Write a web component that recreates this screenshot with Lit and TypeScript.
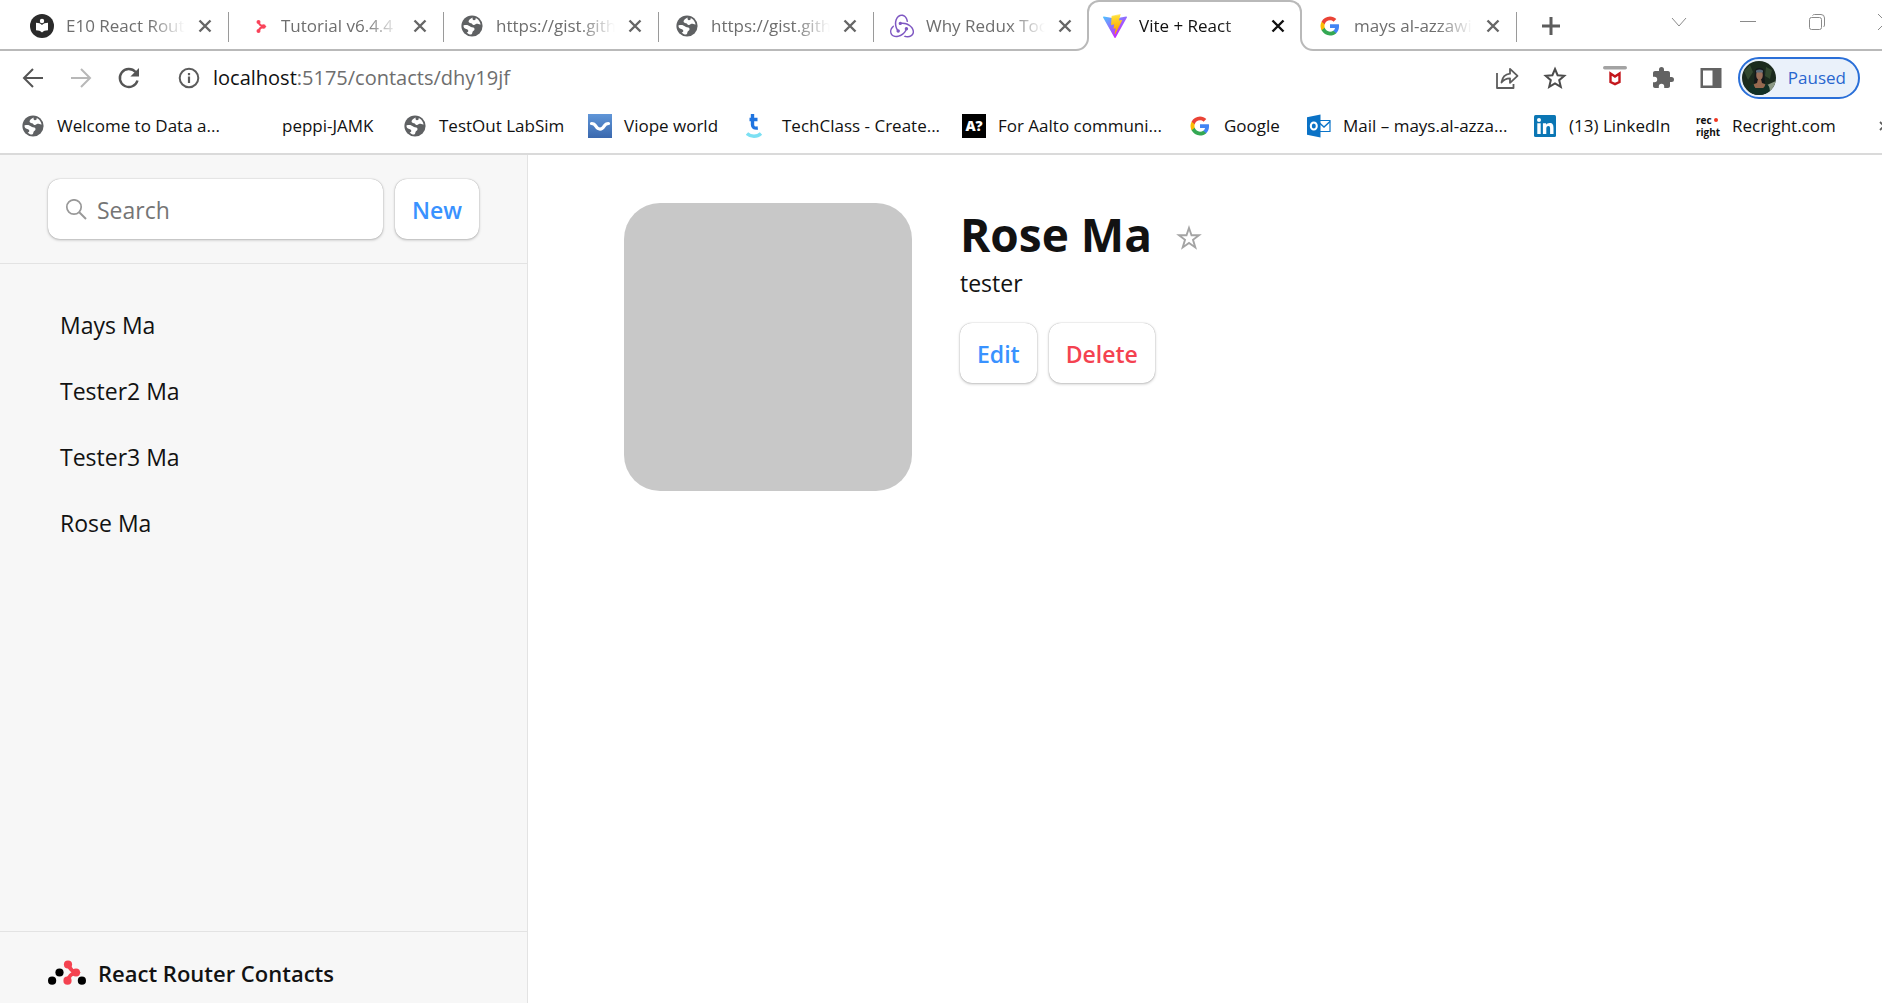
import { LitElement, html, css, svg, nothing, type TemplateResult } from "lit";
import { customElement, property, state } from "lit/decorators.js";
import { classMap } from "lit/directives/class-map.js";

/* ---------- icons ---------- */

const icon = (size: number, box: string, body: unknown) =>
  html`<svg width=${size} height=${size} viewBox=${box} fill="none" aria-hidden="true">${body}</svg>`;

const globe = () =>
  icon(24, "0 0 24 24", svg`
    <circle cx="12" cy="12" r="10.6" fill="#5f6163"/>
    <path fill="#fff" d="M12.6 3.4C11 4.3 9 5.4 8.6 7c-.3 1.500 1 2 2.400 2.200 1.200.2 1.300 1.500 2.500 1.800 1.500.4 1.700-1 3-1.200 1.400-.1 2.500.8 4.100.6C20 6.800 17.200 4.300 15.600 3.900c.5 1.200-.2 2.300-1.600 2.300-1.100 0-1.700-1-1.400-2.800z"/>
    <path fill="#fff" d="M3.400 11.600c1.600-.6 3.600-.6 4.900-.2 1.600.5 2.200 1.600 3.700 1.900 1.700.3 2.700.6 2.500 2.100-.2 1.300-1.600 1.300-2 2.500-.3 1 0 1.700-1.400 2.700-1.900-.2-3.300-1-4.500-2.200.9.100 1.700-.4 1.700-1.400 0-1.100-.8-1.800-2.200-2-1.500-.2-2.500-1.200-2.700-3.400z"/>`);

const reader = () =>
  icon(24, "0 0 24 24", svg`
    <circle cx="12" cy="12" r="12" fill="#2b2b2b"/>
    <circle cx="12" cy="7" r="2.200" fill="#fff"/>
    <path d="M6 8.800c2.600 0 4.600.8 6 2.200 1.400-1.400 3.400-2.200 6-2.200v7.400c-2.600 0-4.600.8-6 2.200-1.400-1.400-3.400-2.200-6-2.200z" fill="#fff"/>`);

const routerArrow = () =>
  icon(24, "0 0 24 24", svg`
    <path d="M13.500 8c1 2.500 1 3 5 4.500-3 .8-4 1.500-5 4.500" stroke="#f9435a" stroke-width="2"/>
    <circle cx="13.500" cy="8" r="2" fill="#f9435a"/>
    <circle cx="18.500" cy="12.500" r="2.300" fill="#f9435a"/>
    <circle cx="13.500" cy="17" r="2" fill="#f9435a"/>`);

const redux = () =>
  icon(24, "0 0 24 24", svg`<path fill="#7e57c2" d="M16.634 16.504c.87-.075 1.543-.84 1.5-1.754-.047-.914-.796-1.648-1.709-1.648h-.061a1.71 1.71 0 00-1.648 1.769c.03.479.226.869.494 1.153-1.048 2.038-2.621 3.535-5.005 4.795-1.603.838-3.296 1.154-4.944.93-1.378-.195-2.456-.81-3.116-1.799-.988-1.499-1.078-3.116-.255-4.734.601-1.166 1.499-2.023 2.099-2.443a9.96 9.96 0 01-.42-1.543C-.868 14.408-.416 18.752.932 20.805c1.004 1.498 3.057 2.456 5.304 2.456.599 0 1.23-.044 1.843-.194 3.897-.749 6.848-3.086 8.541-6.532zM21.99 12.759c-2.308-2.709-5.709-4.193-9.606-4.193h-.51c-.253-.554-.837-.899-1.498-.899h-.045c-.943 0-1.678.81-1.647 1.753.03.898.794 1.648 1.708 1.648h.074a1.69 1.69 0 001.499-1.049h.555c2.309 0 4.495.674 6.488 1.992 1.527 1.005 2.622 2.323 3.237 3.896.538 1.288.509 2.547-.045 3.597-.855 1.647-2.294 2.517-4.196 2.517-1.199 0-2.367-.375-2.967-.644-.36.298-.96.793-1.394 1.093 1.318.598 2.652.943 3.94.943 2.922 0 5.093-1.647 5.918-3.236.898-1.798.824-4.824-1.47-7.416zM6.49 17.042c.03.899.793 1.648 1.708 1.648h.06a1.688 1.688 0 001.648-1.768c0-.9-.779-1.647-1.693-1.647h-.06c-.06 0-.149 0-.226.029-1.243-2.098-1.768-4.347-1.572-6.772.12-1.828.72-3.417 1.797-4.735.899-1.124 2.593-1.68 3.746-1.708 3.236-.061 4.585 3.971 4.689 5.574l1.498.45C17.741 3.197 14.686.62 11.764.62 9.02.62 6.49 2.613 5.47 5.535 4.077 9.43 4.991 13.177 6.7 16.174c-.15.195-.24.539-.21.868z"/>`);

const vite = () =>
  icon(24, "0 0 24 24", svg`
    <defs>
      <linearGradient id="vite-a" x1="0" y1="0" x2="14" y2="20" gradientUnits="userSpaceOnUse"><stop stop-color="#41d1ff"/><stop offset="1" stop-color="#bd34fe"/></linearGradient>
      <linearGradient id="vite-b" x1="12" y1="1" x2="14" y2="16" gradientUnits="userSpaceOnUse"><stop stop-color="#ffea83"/><stop offset=".1" stop-color="#ffdd35"/><stop offset="1" stop-color="#ffa800"/></linearGradient>
    </defs>
    <path fill="url(#vite-a)" d="M23.900 3.500 12.600 23.700c-.3.400-.8.400-1.100 0L.1 3.500c-.3-.5.200-1.100.7-1l11.300 2 11.100-2c.6-.1 1 .5.7 1z"/>
    <path fill="url(#vite-b)" d="m17.300 0-8.400 1.700a.3.300 0 0 0-.3.300L8.100 10.700c0 .2.200.4.400.3l2.300-.5c.2-.1.400.1.400.4l-.7 3.400c-.1.200.2.400.4.400l1.400-.5c.2 0 .5.200.4.400l-1.100 5.300c-.1.300.4.500.5.200l.2-.2 6.800-13.500c.1-.3-.1-.5-.4-.5l-2.400.5c-.2 0-.4-.2-.3-.4L17.600.4c.1-.3-.1-.5-.3-.4z"/>`);

const google = () =>
  icon(24, "-4 -4 56 56", svg`
    <path fill="#4285f4" d="M45.120 24.500c0-1.560-.14-3.060-.4-4.500H24v8.510h11.840c-.51 2.750-2.060 5.080-4.390 6.640v5.520h7.110c4.160-3.830 6.560-9.470 6.560-16.170z"/>
    <path fill="#34a853" d="M24 46c5.940 0 10.920-1.970 14.560-5.330l-7.110-5.520c-1.970 1.320-4.490 2.100-7.450 2.100-5.730 0-10.580-3.870-12.310-9.070H4.340v5.700C7.960 41.070 15.400 46 24 46z"/>
    <path fill="#fbbc04" d="M11.690 28.180a13.200 13.200 0 0 1 0-8.360v-5.700H4.340a21.990 21.990 0 0 0 0 19.760l7.350-5.700z"/>
    <path fill="#ea4335" d="M24 10.750c3.230 0 6.130 1.110 8.410 3.290l6.310-6.310C34.910 4.180 29.930 2 24 2 15.400 2 7.960 6.930 4.340 14.120l7.350 5.700c1.730-5.200 6.580-9.070 12.310-9.070z"/>`);

const viope = () =>
  icon(24, "0 0 24 24", svg`
    <defs><linearGradient id="viope-a" x1="0" y1="0" x2="0" y2="1"><stop stop-color="#6096d8"/><stop offset="1" stop-color="#3a68ae"/></linearGradient></defs>
    <path fill="url(#viope-a)" d="M0 0h24v24H0z"/>
    <path d="M3.500 9.500c3 0 3.400 1 4.600 3 2 3.400 5.800 3.400 7.800 0 1.200-2 1.600-3 4.600-3" stroke="#fff" stroke-width="3.200" stroke-linecap="round"/>`);

const techClass = () =>
  icon(24, "0 0 24 24", svg`
    <path d="M6.500 0v10.500c0 3 1.800 4 5.300 3.500M3.500 5.500h8" stroke="#1f74e0" stroke-width="3.400"/>
    <path d="M1 19.500c4 3.700 10 3.700 14 0" stroke="#7ce0f3" stroke-width="3.400"/>`);

const outlook = () =>
  icon(24, "0 0 24 24", svg`
    <path d="M12 6.500h11v11H12z" fill="#fff" stroke="#0a74c9" stroke-width="1.200"/>
    <path d="m12.500 9 4.500 4 6-5.500" stroke="#0a74c9" stroke-width="1.400"/>
    <path fill="#0a72c6" d="m0 3.200 13.500-2.700v23L0 20.800z"/>
    <ellipse cx="6.800" cy="12" rx="3" ry="3.600" stroke="#fff" stroke-width="2"/>`);

const linkedIn = () =>
  icon(24, "0 0 24 24", svg`
    <rect x="1" y="1" width="22" height="22" rx="1.500" fill="#0b76b4"/>
    <circle cx="6" cy="6" r="2" fill="#fff"/>
    <path d="M4.300 9.300h3.400V20H4.300zM9.900 9.300h3.200v1.500c.6-1 1.800-1.800 3.500-1.800 3.200 0 3.900 2 3.900 5v6h-3.400v-5.300c0-1.500-.2-2.700-1.700-2.700-1.600 0-2.100 1.200-2.100 2.700V20H9.900z" fill="#fff"/>`);

const aalto = () => html`<span class="mark aalto">A?</span>`;
const recright = () => html`<span class="mark recright"><span>rec<i></i></span><span>right</span></span>`;
const blank = () => html`<span class="mark"></span>`;

const cross = (width: number) =>
  icon(14, "0 0 14 14", svg`<path d="m1.500 1.500 11 11m0-11-11 11" stroke="currentColor" stroke-width=${width}/>`);

/* ---------- tab strip ---------- */

interface Tab { title: string; mark: () => TemplateResult; }

@customElement("tab-strip")
export class TabStrip extends LitElement {
  @state() private active = 5;

  private tabs: Tab[] = [
    { title: "E10 React Route", mark: reader },
    { title: "Tutorial v6.4.4 |", mark: routerArrow },
    { title: "https://gist.gith", mark: globe },
    { title: "https://gist.gith", mark: globe },
    { title: "Why Redux Tool", mark: redux },
    { title: "Vite + React", mark: vite },
    { title: "mays al-azzawi", mark: google },
  ];

  static styles = css`
    :host { display: block; }
    .strip {
      display: flex; height: 51px; padding-left: 14px; overflow: hidden;
      background: linear-gradient(#b9b9b9, #b9b9b9) bottom / 100% 2px no-repeat #fff;
    }
    .tab {
      flex: 0 1 215px; min-width: 0; box-sizing: border-box; position: relative;
      display: flex; align-items: center; gap: 12px; padding: 0 16px 0 16px;
    }
    .tab::after {
      content: ""; position: absolute; right: 0; top: 12px; height: 30px; width: 1px; background: #9a9a9a;
    }
    .tab.active::after, .tab.before::after { display: none; }
    .tab.active {
      background: #fff; border: 2px solid #b9b9b9; border-bottom: 0; border-radius: 12px 12px 0 0;
      margin-left: -2px; padding: 0 14px 2px;
    }
    .pick {
      flex: 1; min-width: 0; display: flex; align-items: center; gap: 12px;
      border: 0; padding: 0; background: none; font: inherit; color: #6e6e6e; text-align: left;
    }
    .pick svg { flex: none; }
    .title {
      flex: 1; min-width: 0; overflow: hidden; white-space: nowrap; line-height: 24px;
      -webkit-mask-image: linear-gradient(to right, #000 calc(100% - 36px), transparent);
      mask-image: linear-gradient(to right, #000 calc(100% - 36px), transparent);
    }
    .active .pick, .active .close { color: #111; }
    .close { border: 0; padding: 0; background: none; color: #666; display: flex; width: 16px; justify-content: center; }
    .foot { position: absolute; bottom: 0; }
    .foot.left { left: -14px; }
    .foot.right { right: -14px; }
    .add { border: 0; background: none; color: #5c5c5c; display: flex; align-items: center; padding: 0 24px; }
    .window { margin-left: auto; margin-right: -38px; flex: none; display: flex; padding-bottom: 7px; }
    .window button {
      width: 69px; border: 0; padding: 0; background: none; color: #8a8a8a;
      display: flex; align-items: center; justify-content: center;
    }
  `;

  render() {
    return html`<div class="strip">
      ${this.tabs.map((tab, i) => html`
        <div class=${classMap({ tab: true, active: i === this.active, before: i === this.active - 1 })}>
          <button class="pick" @click=${() => (this.active = i)}>${tab.mark()}<span class="title">${tab.title}</span></button>
          <button class="close" aria-label="Close tab">${cross(2.4)}</button>
          ${i === this.active ? html`
            <svg class="foot left" width="14" height="14" viewBox="0 0 14 14" aria-hidden="true"><path d="M0 13h1A12 12 0 0 0 13 1V0h1v14H0z" fill="#fff"/><path d="M0 13h1A12 12 0 0 0 13 1V0" fill="none" stroke="#b9b9b9" stroke-width="2"/></svg>
            <svg class="foot right" width="14" height="14" viewBox="0 0 14 14" aria-hidden="true"><path d="M14 13h-1A12 12 0 0 1 1 1V0H0v14h14z" fill="#fff"/><path d="M14 13h-1A12 12 0 0 1 1 1V0" fill="none" stroke="#b9b9b9" stroke-width="2"/></svg>` : nothing}
        </div>`)}
      <button class="add" aria-label="New tab">${icon(20, "0 0 20 20", svg`<path d="M10 1v18M1 10h18" stroke="currentColor" stroke-width="3"/>`)}</button>
      <div class="window">
        <button aria-label="Search tabs">${icon(16, "0 0 16 16", svg`<path d="m1 4 7 8 7-8" stroke="currentColor"/>`)}</button>
        <button aria-label="Minimize">${icon(16, "0 0 16 16", svg`<path d="M0 7.500h16" stroke="currentColor"/>`)}</button>
        <button aria-label="Restore">${icon(16, "0 0 16 16", svg`<rect x=".5" y="3.500" width="12" height="12" rx="2" stroke="currentColor"/><path d="M3.500 1.500c.5-.7 1-1 2-1H12A3.500 3.500 0 0 1 15.500 4v7c0 .8-.4 1.500-1 2" stroke="currentColor"/>`)}</button>
        <button aria-label="Close">${icon(16, "0 0 16 16", svg`<path d="m0 0 16 16M16 0 0 16" stroke="currentColor"/>`)}</button>
      </div>
    </div>`;
  }
}

/* ---------- address bar ---------- */

@customElement("address-bar")
export class AddressBar extends LitElement {
  static styles = css`
    :host { display: block; }
    .bar { display: flex; align-items: center; height: 54px; padding: 0 22px 0 21px; }
    button { border: 0; padding: 0; background: none; color: #5c5c5c; display: flex; flex: none; }
    .nav { display: flex; gap: 24px; }
    .info { margin: 0 12px 0 36px; }
    .url { font-size: 20px; line-height: 28px; color: #6e6e6e; white-space: nowrap; flex: 1; }
    .url b { font-weight: 400; color: #111; }
    .tools { display: flex; gap: 24px; align-items: center; }
    .extensions { display: flex; gap: 24px; margin: 0 15px 0 36px; align-items: center; }
    .profile {
      box-sizing: border-box; height: 42px; padding: 0 12px 0 2px; gap: 12px; align-items: center;
      border: 2px solid #2a6fd8; border-radius: 21px; background: #eaf1fa; color: #2866cf;
      font: inherit; line-height: 24px;
    }
  `;

  render() {
    return html`<div class="bar">
      <div class="nav">
        <button aria-label="Back">${icon(24, "0 0 24 24", svg`<path d="M22 12H3m9-9-9 9 9 9" stroke="#555" stroke-width="2"/>`)}</button>
        <button aria-label="Forward">${icon(24, "0 0 24 24", svg`<path d="M2 12h19m-9-9 9 9-9 9" stroke="#b8b8b8" stroke-width="2"/>`)}</button>
        <button aria-label="Reload">${icon(24, "0 0 24 24", svg`<path d="M20.500 14.500A9 9 0 1 1 18.600 6" stroke="#555" stroke-width="2.400"/><path d="M22 2v8.600h-8.600z" fill="#555"/>`)}</button>
      </div>
      <button class="info" aria-label="Site information">${icon(24, "0 0 24 24", svg`<circle cx="12" cy="12" r="9.300" stroke="#5c5c5c" stroke-width="2"/><path d="M12 10.500v6.500M12 7v2.200" stroke="#5c5c5c" stroke-width="2.200"/>`)}</button>
      <div class="url"><b>localhost</b>:5175/contacts/dhy19jf</div>
      <div class="tools">
        <button aria-label="Share">${icon(24, "0 0 24 24", svg`<path d="M2 7v15h16.500v-4M6.500 16.500c.8-5.300 3.300-8.300 8.500-8.800V2.800l7.500 7-7.500 7v-4.500c-3.800 0-6.500 1.400-8.500 4.200z" stroke="#5c5c5c" stroke-width="1.800" stroke-linejoin="round"/>`)}</button>
        <button aria-label="Bookmark this page">${icon(24, "0 0 24 24", svg`<path d="m12 3 2.600 6.200 6.700.6-5.100 4.400 1.600 6.600-5.800-3.500-5.800 3.500 1.600-6.600-5.100-4.400 6.700-.6z" stroke="#4c4c4c" stroke-width="2"/>`)}</button>
      </div>
      <div class="extensions">
        <button aria-label="McAfee">${icon(24, "0 0 24 24", svg`<rect y="0" width="24" height="3.500" rx="1.700" fill="#a3a3a3"/><path d="m7.500 7.500 4.500 3 4.500-3V16L12 18.200 7.500 16z" stroke="#c4161c" stroke-width="2.400"/>`)}</button>
        <button aria-label="Extensions">${icon(24, "0 0 24 24", svg`<path fill="#636363" d="M20.500 11H19V7c0-1.100-.9-2-2-2h-4V3.500a2.500 2.500 0 0 0-5 0V5H4c-1.100 0-2 .9-2 2v3.800h1.500a2.700 2.700 0 0 1 0 5.400H2V20c0 1.100.9 2 2 2h3.800v-1.500a2.700 2.700 0 0 1 5.400 0V22H17c1.100 0 2-.9 2-2v-4h1.500a2.500 2.500 0 0 0 0-5z"/>`)}</button>
        <button aria-label="Side panel">${icon(24, "0 0 24 24", svg`<path fill="#636363" fill-rule="evenodd" d="M1.500 2h21v20h-21zM4 4.500v15h9.500v-15z"/>`)}</button>
      </div>
      <button class="profile">
        ${icon(34, "0 0 34 34", svg`
          <clipPath id="face"><circle cx="17" cy="17" r="17"/></clipPath>
          <g clip-path="url(#face)">
            <path fill="#1b2a1d" d="M0 0h34v34H0z"/>
            <path fill="#33482f" d="M2 10 8 4l3 7-5 8zM24 6l6 3-2 9-5-3z"/>
            <path fill="#8d9a86" d="m25 24 9-4v10l-7 2z"/>
            <path fill="#14171a" d="M13 10c0-4 9-4 9 0l1 12H12z"/>
            <ellipse cx="17.500" cy="14" rx="3.300" ry="4.500" fill="#9a6f5a"/>
            <path fill="#5b6a78" d="M14 9.500c2-1.500 5-1.500 7 0v2h-7z"/>
            <path fill="#96684f" d="M16 18h3l1 4 5 2-8 6-7-6 5-2z"/>
            <path fill="#123026" d="M7 27c1-3 3-4 4.500-4l1.500 4h9l1.500-4c2 0 3 1 4 4l1 7H6z"/>
          </g>`)}
        <span>Paused</span>
      </button>
    </div>`;
  }
}

/* ---------- bookmarks ---------- */

@customElement("bookmark-bar")
export class BookmarkBar extends LitElement {
  private links = [
    { label: "Welcome to Data a...", mark: globe },
    { label: "peppi-JAMK", mark: blank },
    { label: "TestOut LabSim", mark: globe },
    { label: "Viope world", mark: viope },
    { label: "TechClass - Create...", mark: techClass },
    { label: "For Aalto communi...", mark: aalto },
    { label: "Google", mark: google },
    { label: "Mail – mays.al-azza...", mark: outlook },
    { label: "(13) LinkedIn", mark: linkedIn },
    { label: "Recright.com", mark: recright },
  ];

  static styles = css`
    :host { display: block; }
    .bar {
      display: grid; grid-template-columns: 225px 157px 185px 158px 216px 226px 119px 226px 163px 183px auto;
      align-items: center; justify-content: start; box-sizing: border-box;
      height: 50px; padding: 0 0 6px 21px; overflow: hidden;
      border-bottom: 2px solid #dadada;
    }
    a { display: flex; align-items: center; gap: 12px; color: #111; text-decoration: none; line-height: 24px; white-space: nowrap; }
    .mark { width: 24px; height: 24px; flex: none; }
    .aalto { background: #000; color: #fff; font-size: 14px; font-weight: 800; text-align: center; }
    .recright { display: flex; flex-direction: column; font-size: 10px; line-height: 12px; font-weight: 700; }
    .recright i { display: inline-block; width: 4px; height: 4px; margin: 0 0 2px 2px; border-radius: 50%; background: #f0341e; }
    .more { border: 0; background: none; padding: 0; display: flex; }
  `;

  render() {
    return html`<nav class="bar" aria-label="Bookmarks">
      ${this.links.map((l) => html`<a href="#">${l.mark()}<span>${l.label}</span></a>`)}
      <button class="more" aria-label="More bookmarks">${icon(12, "0 0 12 12", svg`<path d="m1 2 4 4-4 4m5-8 4 4-4 4" stroke="#5c5c5c" stroke-width="1.800"/>`)}</button>
    </nav>`;
  }
}

/* ---------- contacts page ---------- */

@customElement("contacts-page")
export class ContactsPage extends LitElement {
  @property({ type: Array }) contacts = ["Mays Ma", "Tester2 Ma", "Tester3 Ma", "Rose Ma"];

  static styles = css`
    :host { display: flex; flex: 1; min-height: 0; font-size: 23px; line-height: 36px; color: #121212; }
    .side {
      width: 528px; box-sizing: border-box; flex: none; display: flex; flex-direction: column;
      background: #f7f7f7; border-right: 1px solid #e3e3e3;
    }
    .find { display: flex; gap: 12px; padding: 24px 48px; border-bottom: 1px solid #e3e3e3; }
    .search { flex: 1; min-width: 0; display: flex; align-items: center; gap: 10px; }
    .search, .btn {
      box-sizing: border-box; height: 60px; border-radius: 12px; background: #fff;
      border: 0; padding: 2px 17px 0;
      box-shadow: 0 0 1px rgba(0, 0, 0, 0.35), 0 1px 3px rgba(0, 0, 0, 0.25);
    }
    .search svg { flex: none; }
    input {
      flex: 1; min-width: 0; border: 0; padding: 0; outline: 0; background: none;
      font: inherit; color: #121212;
    }
    input::placeholder { color: #757575; opacity: 1; }
    .btn { font: inherit; font-weight: 600; color: #3992ff; }
    .btn.danger { color: #f44250; }
    .people { flex: 1; margin: 0; padding: 31px 48px 0; list-style: none; display: flex; flex-direction: column; gap: 6px; }
    .people a { display: block; padding: 12px; color: inherit; text-decoration: none; }
    .brand {
      display: flex; align-items: center; gap: 12px; margin: 0; padding: 23px 48px 12px;
      border-top: 1px solid #e3e3e3; font-size: 22px; font-weight: 600;
    }
    .detail { flex: 1; min-width: 0; display: flex; align-items: flex-start; gap: 48px; padding: 48px 96px; background: #fff; }
    .photo { width: 288px; height: 288px; flex: none; border-radius: 36px; background: #c8c8c8; }
    .name { display: flex; align-items: center; gap: 24px; margin: 0; font-size: 46px; line-height: 62px; font-weight: 700; }
    .fav { border: 0; padding: 8px 0 0; background: none; display: flex; }
    .note { margin: 0; }
    .actions { display: flex; gap: 12px; margin-top: 22px; }
  `;

  render() {
    return html`
      <aside class="side">
        <form class="find" @submit=${(e: Event) => e.preventDefault()}>
          <label class="search">
            ${icon(22, "0 0 22 22", svg`<circle cx="9" cy="8" r="7.200" stroke="#999" stroke-width="1.700"/><path d="m14 13 7 7" stroke="#999" stroke-width="2"/>`)}
            <input type="text" placeholder="Search" aria-label="Search contacts">
          </label>
          <button class="btn">New</button>
        </form>
        <ul class="people">${this.contacts.map((c) => html`<li><a href="#">${c}</a></li>`)}</ul>
        <h1 class="brand">
          <svg width="38" height="26" viewBox="0 0 38 26" aria-hidden="true">
            <path d="M20 4.300c2 3.500 1.500 5.500 7.500 8-4 1.500-6.500 3-7.500 8" fill="none" stroke="#f44250" stroke-width="4"/>
            <circle cx="20" cy="4.500" r="4.100" fill="#f44250"/><circle cx="28" cy="12.500" r="4.100" fill="#f44250"/><circle cx="19.500" cy="20.700" r="4.100" fill="#f44250"/>
            <circle cx="4.100" cy="20.700" r="4.100"/><circle cx="11.500" cy="12.500" r="4.100"/><circle cx="33.900" cy="20.700" r="4.100"/>
          </svg>
          React Router Contacts
        </h1>
      </aside>
      <main class="detail">
        <div class="photo" role="img" aria-label="Contact photo"></div>
        <div>
          <h2 class="name">Rose Ma
            <button class="fav" aria-label="Add to favorites">${icon(26, "0 0 26 26", svg`<path d="m13 3 2.500 7.300h7.500l-6 4.500 2.300 7.600L13 17.900l-6.300 4.500L9 14.800l-6-4.500h7.500z" stroke="#a4a4a4" stroke-width="1.900"/>`)}</button>
          </h2>
          <p class="note">tester</p>
          <div class="actions">
            <button class="btn">Edit</button>
            <button class="btn danger">Delete</button>
          </div>
        </div>
      </main>`;
  }
}

@customElement("app-root")
export class AppRoot extends LitElement {
  static styles = css`
    :host {
      display: flex; flex-direction: column; min-height: 100vh; background: #fff;
      font-family: "Open Sans", "Noto Sans", sans-serif; font-size: 17px;
    }
  `;

  render() {
    return html`
      <tab-strip></tab-strip>
      <address-bar></address-bar>
      <bookmark-bar></bookmark-bar>
      <contacts-page></contacts-page>`;
  }
}
